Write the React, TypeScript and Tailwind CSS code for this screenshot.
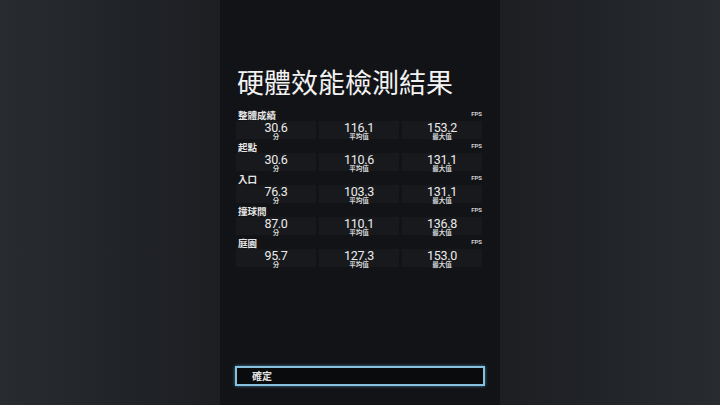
const rows = [
  { label: '整體成績', score: '30.6', avg: '116.1', max: '153.2' },
  { label: '起點', score: '30.6', avg: '110.6', max: '131.1' },
  { label: '入口', score: '76.3', avg: '103.3', max: '131.1' },
  { label: '撞球間', score: '87.0', avg: '110.1', max: '136.8' },
  { label: '庭園', score: '95.7', avg: '127.3', max: '153.0' },
];

const cjk = { fontFamily: '"Noto Sans CJK TC", "Noto Sans", sans-serif' };
const num = { fontFamily: 'Roboto, "Noto Sans CJK TC", sans-serif' };

function Cell({ value, unit }: { value: string; unit: string }) {
  return (
    <div className="h-[18px] bg-[#17191c] flex flex-col items-center">
      <span className="text-[12.5px] leading-[11px] text-[#ececec] tracking-[-0.3px] pt-[1px]" style={num}>
        {value}
      </span>
      <span className="text-[6.5px] leading-[6px] text-[#d4d4d4] font-bold" style={cjk}>
        {unit}
      </span>
    </div>
  );
}

export default function App() {
  return (
    <div className="w-full h-[405px] flex bg-[#1c1e22] overflow-hidden">
      <div className="flex-1 bg-gradient-to-r from-[#282b2f] to-[#1c1e22]" />
      <div className="w-[280px] h-full bg-[#121316] flex flex-col px-4">
        <h1 className="mt-[64px] h-[36px] text-[27px] leading-[36px] text-[#f2f2f2] pl-[1px]" style={cjk}>
          硬體效能檢測結果
        </h1>
        <div className="mt-[9px] flex flex-col gap-[2px] pr-[2px]">
          {rows.map((r) => (
            <div key={r.label}>
              <div className="h-3 flex items-center justify-between pl-[2px]">
                <span className="text-[9.5px] leading-[12px] font-bold text-[#e6e6e6]" style={cjk}>
                  {r.label}
                </span>
                <span className="text-[6px] leading-[6px] font-bold text-[#d0d0d0] mb-[2px]" style={num}>
                  FPS
                </span>
              </div>
              <div className="grid grid-cols-3 gap-[3px]">
                <Cell value={r.score} unit="分" />
                <Cell value={r.avg} unit="平均值" />
                <Cell value={r.max} unit="最大值" />
              </div>
            </div>
          ))}
        </div>
        <div className="mt-auto mb-[19px] h-[20px] border-2 border-[#86c0de] bg-[#0a0b0c] shadow-[0_0_3px_#4a7f9c] flex items-center pl-[15px] -mx-[1px]">
          <span className="text-[10px] leading-none font-bold text-[#e0e0e0]" style={cjk}>
            確定
          </span>
        </div>
      </div>
      <div className="flex-1 bg-gradient-to-l from-[#282b2f] to-[#1c1e22]" />
    </div>
  );
}
